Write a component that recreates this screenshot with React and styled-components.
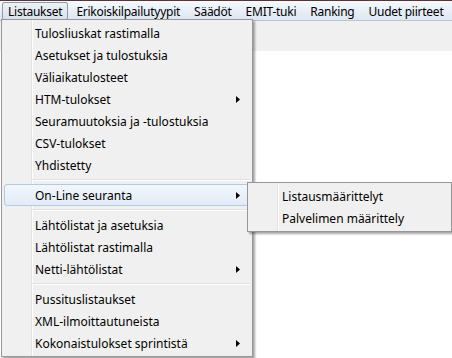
import React from "react"
import styled, { createGlobalStyle } from "styled-components"

const GlobalStyle = createGlobalStyle`
  html, body {
    margin: 0;
    padding: 0;
    background: #ffffff;
  }
  body {
    font-family: "Noto Sans", "Open Sans", sans-serif;
    font-size: 12px;
    color: #000000;
  }
`

const StyledWindow = styled.div`
  position: relative;
  width: 452px;
  height: 358px;
  overflow: hidden;
  display: flex;
  flex-direction: column;
  background: #ffffff;
`

const StyledMenuBar = styled.div`
  display: flex;
  flex-shrink: 0;
  align-items: stretch;
  height: 19px;
  padding-left: 2px;
  border-top: 1px solid #5a3434;
  border-bottom: 1px solid #b9c5d3;
  background: linear-gradient(#f7fafd, #e6edf6 60%, #dce6f2);
  letter-spacing: -0.25px;
`

const StyledBarItem = styled.div`
  display: flex;
  align-items: center;
  margin: 1px 2px 0 0;
  padding: 0 5px;
  border: 1px solid ${({ $active }) => ($active ? "#8d9bab" : "transparent")};
  border-radius: 2px;
  background: ${({ $active }) =>
    $active ? "linear-gradient(#eef2f7, #d9e1eb)" : "transparent"};
  white-space: nowrap;
`

const StyledToolStrip = styled.div`
  flex-shrink: 0;
  height: 30px;
  background: #f0f0f0;
`

const StyledClient = styled.div`
  flex: 1;
  background: #ffffff;
`

const StyledMenu = styled.div`
  position: absolute;
  left: ${({ $left }) => $left}px;
  top: ${({ $top }) => $top}px;
  width: ${({ $width }) => $width}px;
  box-sizing: border-box;
  padding: 2px;
  border: 1px solid #979797;
  background-color: #f0f0f0;
  background-image: linear-gradient(
    to right,
    transparent ${({ $gutter }) => $gutter}px,
    #e2e3e3 ${({ $gutter }) => $gutter}px,
    #e2e3e3 ${({ $gutter }) => $gutter + 1}px,
    #ffffff ${({ $gutter }) => $gutter + 1}px,
    #ffffff ${({ $gutter }) => $gutter + 2}px,
    transparent ${({ $gutter }) => $gutter + 2}px
  );
  box-shadow: 2px 2px 2px rgba(0, 0, 0, 0.35);
`

const StyledItem = styled.div`
  display: flex;
  align-items: center;
  height: 22px;
  box-sizing: border-box;
  padding-left: ${({ $indent }) => $indent}px;
  padding-right: 8px;
  border: 1px solid ${({ $hot }) => ($hot ? "#aecbee" : "transparent")};
  border-radius: 3px;
  margin-right: 1px;
  background: ${({ $hot }) =>
    $hot ? "linear-gradient(#f3f7fc, #e2ebf7)" : "transparent"};
  white-space: nowrap;
`

const StyledLabel = styled.span`
  flex: 1;
`

const StyledSeparator = styled.div`
  height: 8px;
  margin-left: 28px;
  display: flex;
  flex-direction: column;
  justify-content: center;

  &::before {
    content: "";
    height: 1px;
    background: #e0e0e0;
  }
  &::after {
    content: "";
    height: 1px;
    background: #ffffff;
  }
`

const Arrow = () => (
  <svg width="4" height="7" viewBox="0 0 4 7">
    <polygon points="0,0 4,3.5 0,7" fill="#000000" />
  </svg>
)

const barItems = [
  "Listaukset",
  "Erikoiskilpailutyypit",
  "Säädöt",
  "EMIT-tuki",
  "Ranking",
  "Uudet piirteet",
]

const menuGroups = [
  [
    { label: "Tulosliuskat rastimalla" },
    { label: "Asetukset ja tulostuksia" },
    { label: "Väliaikatulosteet" },
    { label: "HTM-tulokset", sub: true },
    { label: "Seuramuutoksia ja -tulostuksia" },
    { label: "CSV-tulokset" },
    { label: "Yhdistetty" },
  ],
  [{ label: "On-Line seuranta", sub: true, hot: true }],
  [
    { label: "Lähtölistat ja asetuksia" },
    { label: "Lähtölistat rastimalla" },
    { label: "Netti-lähtölistat", sub: true },
  ],
  [
    { label: "Pussituslistaukset" },
    { label: "XML-ilmoittautuneista" },
    { label: "Kokonaistulokset sprintistä", sub: true },
  ],
]

const subItems = ["Listausmäärittelyt", "Palvelimen määrittely"]

const App = () => (
  <>
    <GlobalStyle />
    <StyledWindow>
      <StyledMenuBar>
        {barItems.map((item, i) => (
          <StyledBarItem key={item} $active={i === 0}>
            {item}
          </StyledBarItem>
        ))}
      </StyledMenuBar>
      <StyledToolStrip />
      <StyledClient />

      <StyledMenu $left={1} $top={19} $width={252} $gutter={29}>
        {menuGroups.map((group, g) => (
          <React.Fragment key={g}>
            {g > 0 && <StyledSeparator />}
            {group.map(item => (
              <StyledItem key={item.label} $indent={30} $hot={item.hot}>
                <StyledLabel>{item.label}</StyledLabel>
                {item.sub && <Arrow />}
              </StyledItem>
            ))}
          </React.Fragment>
        ))}
      </StyledMenu>

      <StyledMenu $left={247} $top={182} $width={205} $gutter={29}>
        {subItems.map(item => (
          <StyledItem key={item} $indent={31}>
            <StyledLabel>{item}</StyledLabel>
          </StyledItem>
        ))}
      </StyledMenu>
    </StyledWindow>
  </>
)

export default App
